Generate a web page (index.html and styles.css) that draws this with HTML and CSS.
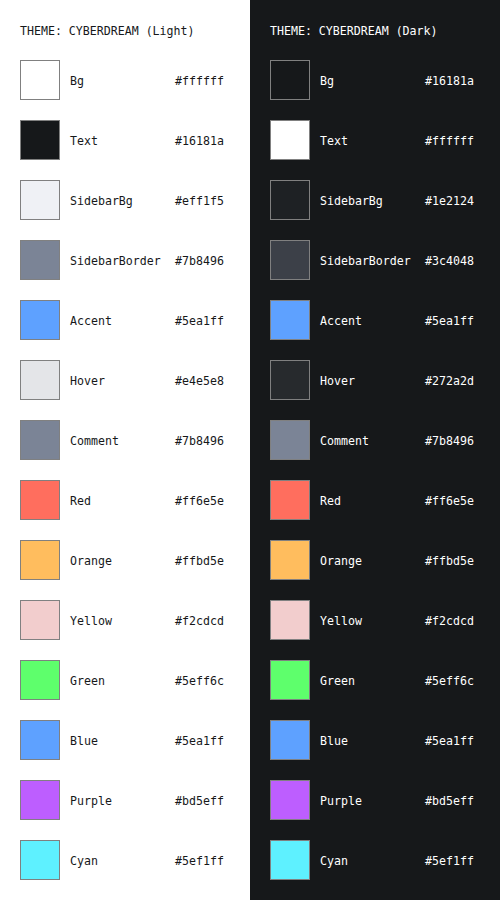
FILE: index.html
```html
<!DOCTYPE html>
<html>
<head>
<meta charset="utf-8">
<link rel="stylesheet" href="styles.css">
</head>
<body>
<div class="page">
  <section class="theme light">
    <h1 class="title">THEME: CYBERDREAM (Light)</h1>
    <div class="row"><span class="sw" style="background:#ffffff"></span><span class="name">Bg</span><span class="hex">#ffffff</span></div>
    <div class="row"><span class="sw" style="background:#16181a"></span><span class="name">Text</span><span class="hex">#16181a</span></div>
    <div class="row"><span class="sw" style="background:#eff1f5"></span><span class="name">SidebarBg</span><span class="hex">#eff1f5</span></div>
    <div class="row"><span class="sw" style="background:#7b8496"></span><span class="name">SidebarBorder</span><span class="hex">#7b8496</span></div>
    <div class="row"><span class="sw" style="background:#5ea1ff"></span><span class="name">Accent</span><span class="hex">#5ea1ff</span></div>
    <div class="row"><span class="sw" style="background:#e4e5e8"></span><span class="name">Hover</span><span class="hex">#e4e5e8</span></div>
    <div class="row"><span class="sw" style="background:#7b8496"></span><span class="name">Comment</span><span class="hex">#7b8496</span></div>
    <div class="row"><span class="sw" style="background:#ff6e5e"></span><span class="name">Red</span><span class="hex">#ff6e5e</span></div>
    <div class="row"><span class="sw" style="background:#ffbd5e"></span><span class="name">Orange</span><span class="hex">#ffbd5e</span></div>
    <div class="row"><span class="sw" style="background:#f2cdcd"></span><span class="name">Yellow</span><span class="hex">#f2cdcd</span></div>
    <div class="row"><span class="sw" style="background:#5eff6c"></span><span class="name">Green</span><span class="hex">#5eff6c</span></div>
    <div class="row"><span class="sw" style="background:#5ea1ff"></span><span class="name">Blue</span><span class="hex">#5ea1ff</span></div>
    <div class="row"><span class="sw" style="background:#bd5eff"></span><span class="name">Purple</span><span class="hex">#bd5eff</span></div>
    <div class="row"><span class="sw" style="background:#5ef1ff"></span><span class="name">Cyan</span><span class="hex">#5ef1ff</span></div>
  </section>
  <section class="theme dark">
    <h1 class="title">THEME: CYBERDREAM (Dark)</h1>
    <div class="row"><span class="sw" style="background:#16181a"></span><span class="name">Bg</span><span class="hex">#16181a</span></div>
    <div class="row"><span class="sw" style="background:#ffffff"></span><span class="name">Text</span><span class="hex">#ffffff</span></div>
    <div class="row"><span class="sw" style="background:#1e2124"></span><span class="name">SidebarBg</span><span class="hex">#1e2124</span></div>
    <div class="row"><span class="sw" style="background:#3c4048"></span><span class="name">SidebarBorder</span><span class="hex">#3c4048</span></div>
    <div class="row"><span class="sw" style="background:#5ea1ff"></span><span class="name">Accent</span><span class="hex">#5ea1ff</span></div>
    <div class="row"><span class="sw" style="background:#272a2d"></span><span class="name">Hover</span><span class="hex">#272a2d</span></div>
    <div class="row"><span class="sw" style="background:#7b8496"></span><span class="name">Comment</span><span class="hex">#7b8496</span></div>
    <div class="row"><span class="sw" style="background:#ff6e5e"></span><span class="name">Red</span><span class="hex">#ff6e5e</span></div>
    <div class="row"><span class="sw" style="background:#ffbd5e"></span><span class="name">Orange</span><span class="hex">#ffbd5e</span></div>
    <div class="row"><span class="sw" style="background:#f2cdcd"></span><span class="name">Yellow</span><span class="hex">#f2cdcd</span></div>
    <div class="row"><span class="sw" style="background:#5eff6c"></span><span class="name">Green</span><span class="hex">#5eff6c</span></div>
    <div class="row"><span class="sw" style="background:#5ea1ff"></span><span class="name">Blue</span><span class="hex">#5ea1ff</span></div>
    <div class="row"><span class="sw" style="background:#bd5eff"></span><span class="name">Purple</span><span class="hex">#bd5eff</span></div>
    <div class="row"><span class="sw" style="background:#5ef1ff"></span><span class="name">Cyan</span><span class="hex">#5ef1ff</span></div>
  </section>
</div>
</body>
</html>
```
FILE: styles.css
```css
html, body {
  margin: 0;
  padding: 0;
}
body {
  font-family: "DejaVu Sans Mono", "Liberation Mono", monospace;
  font-size: 11.6px;
}
.page {
  display: grid;
  grid-template-columns: 250px 250px;
  width: 500px;
  height: 900px;
}
.theme {
  display: flex;
  flex-direction: column;
  gap: 20px;
  padding: 20px;
  box-sizing: border-box;
}
.light {
  background: #ffffff;
  color: #16181a;
}
.dark {
  background: #16181a;
  color: #ffffff;
}
.title {
  margin: 0;
  font-size: 11.6px;
  font-weight: normal;
  line-height: 20px;
  padding-top: 1px;
  height: 19px;
  white-space: nowrap;
}
.row {
  display: flex;
  align-items: center;
  height: 40px;
}
.sw {
  width: 40px;
  height: 40px;
  box-sizing: border-box;
  border: 1px solid #808080;
  flex: none;
}
.name {
  margin-left: 10px;
  width: 105px;
  padding-top: 2px;
  white-space: nowrap;
}
.hex {
  padding-top: 2px;
  white-space: nowrap;
}
```
